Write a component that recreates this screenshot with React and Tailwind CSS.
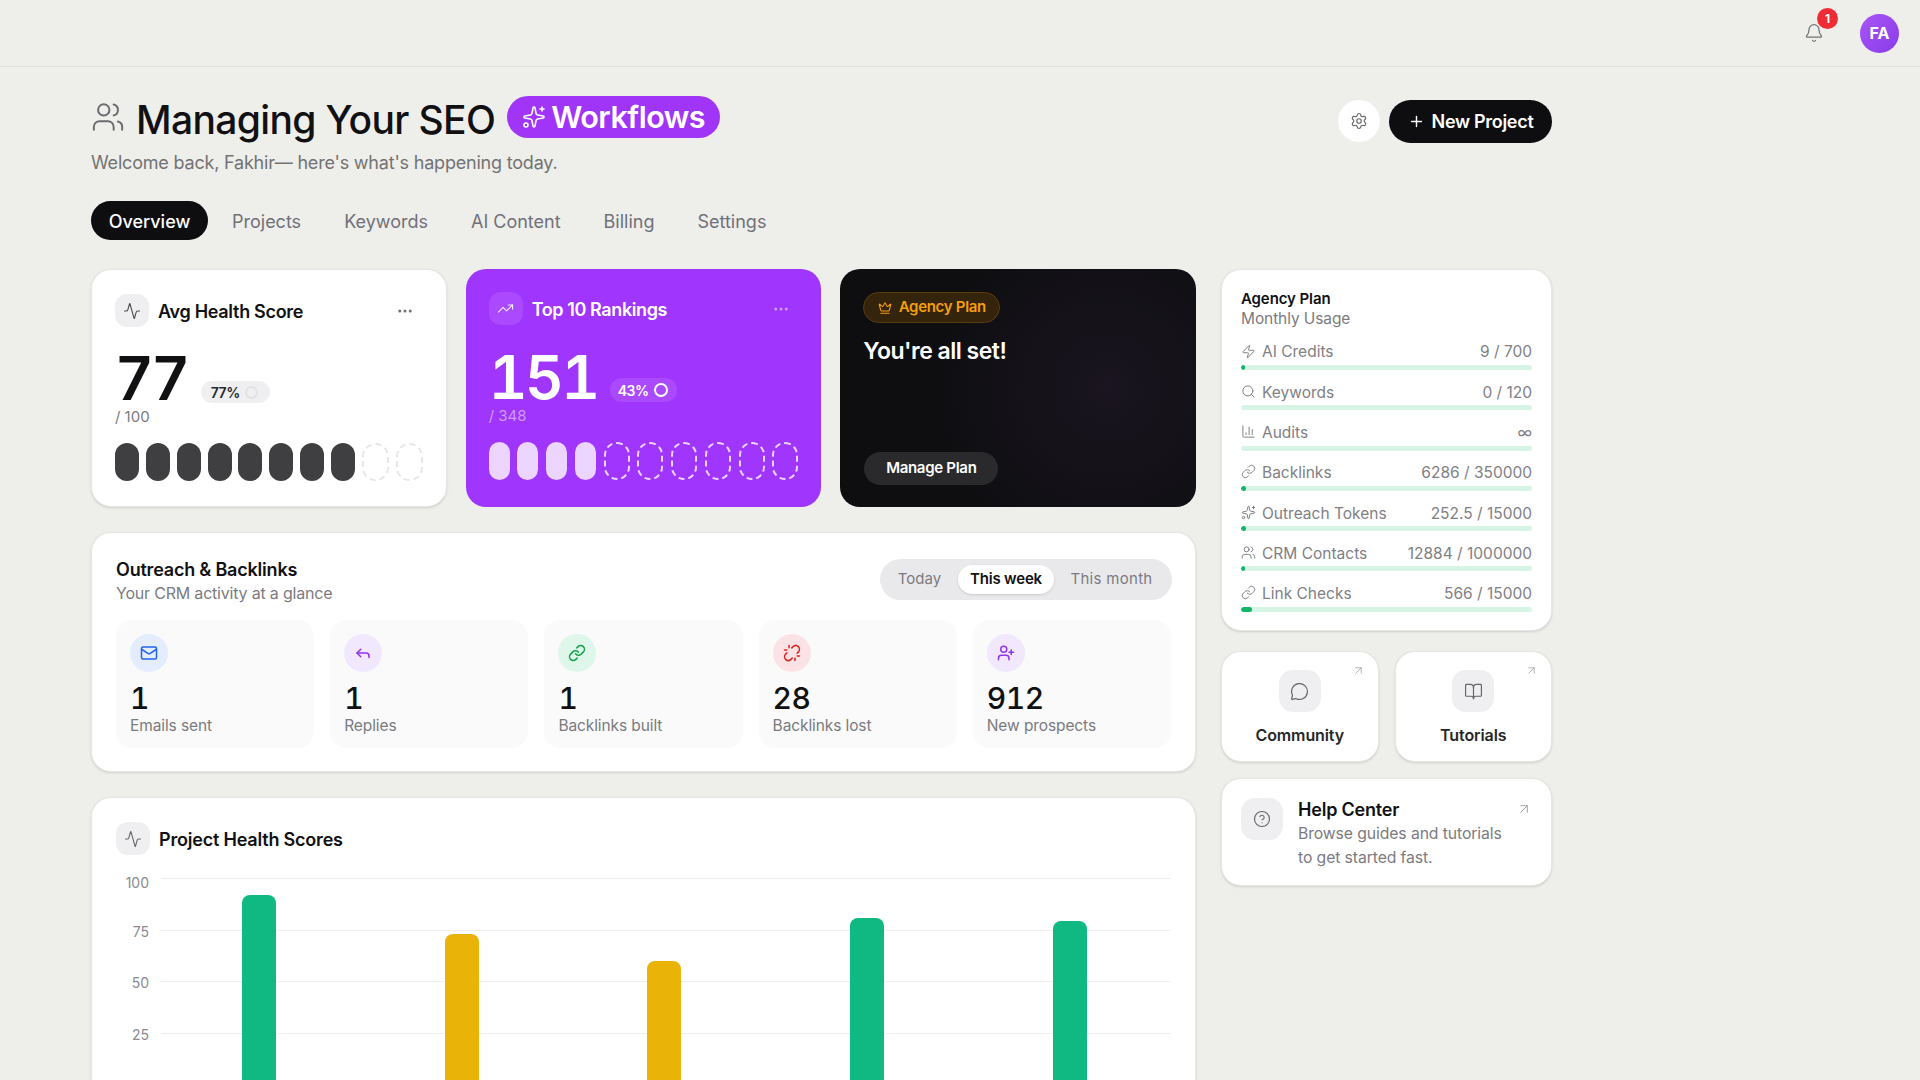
import React from "react";
import { Users, Sparkles, Settings, Plus, Bell, Activity, TrendingUp, Ellipsis, Crown, Zap, Search, ChartColumn, Link as LinkIcon, Mail, Reply, Unlink, UserPlus, MessageCircle, BookOpen, CircleHelp, ArrowUpRight } from "lucide-react";

const tabs = ["Projects", "Keywords", "AI Content", "Billing", "Settings"];
const usage = [
  { icon: Zap, label: "AI Credits", text: "9 / 700", pct: 1.3 },
  { icon: Search, label: "Keywords", text: "0 / 120", pct: 0 },
  { icon: ChartColumn, label: "Audits", text: "∞", pct: 0 },
  { icon: LinkIcon, label: "Backlinks", text: "6286 / 350000", pct: 1.8 },
  { icon: Sparkles, label: "Outreach Tokens", text: "252.5 / 15000", pct: 1.7 },
  { icon: Users, label: "CRM Contacts", text: "12884 / 1000000", pct: 1.3 },
  { icon: LinkIcon, label: "Link Checks", text: "566 / 15000", pct: 3.8 },
];
const stats = [
  { icon: Mail, value: "1", label: "Emails sent", box: "bg-[#e3edfd]", color: "text-[#2563eb]" },
  { icon: Reply, value: "1", label: "Replies", box: "bg-[#f1e8fd]", color: "text-[#9333ea]" },
  { icon: LinkIcon, value: "1", label: "Backlinks built", box: "bg-[#dff6ea]", color: "text-[#16a34a]" },
  { icon: Unlink, value: "28", label: "Backlinks lost", box: "bg-[#fbe3e5]", color: "text-[#dc2626]" },
  { icon: UserPlus, value: "912", label: "New prospects", box: "bg-[#f1e8fd]", color: "text-[#9333ea]" },
];
const bars = [
  { top: "mt-[17px]", color: "bg-[#10b981]" },
  { top: "mt-[56px]", color: "bg-[#eab308]" },
  { top: "mt-[83px]", color: "bg-[#eab308]" },
  { top: "mt-[40px]", color: "bg-[#10b981]" },
  { top: "mt-[43px]", color: "bg-[#10b981]" },
];
const gridRows = [
  { label: "100", offset: "pt-[0px]" },
  { label: "75", offset: "-mt-[3px]" },
  { label: "50", offset: "-mt-[3px]" },
  { label: "25", offset: "-mt-[3px]" },
];

function IconBox({ children, className = "" }) {
  return <div className={"flex h-[33px] w-[34px] items-center justify-center rounded-[12px] " + className}>{children}</div>;
}

export default function App() {
  return (
    <div className="h-screen overflow-hidden bg-[#eeeeeb] text-[#111113] [font-family:Inter,sans-serif]">
      <header className="flex h-[67px] items-center justify-end gap-[36px] border-b border-[#e0e0dd] pr-[21px]">
        <div className="relative">
          <Bell className="h-[20px] w-[20px] text-[#737373]" strokeWidth={1.5} />
          <span className="absolute -right-[14px] -top-[15px] flex h-[21px] w-[21px] items-center justify-center rounded-full bg-[#ef2b36] text-[12px] font-bold text-white">1</span>
        </div>
        <div className="flex h-[39px] w-[39px] items-center justify-center rounded-full bg-gradient-to-br from-[#a855f7] to-[#8b3be8] text-[16px] font-bold text-white">FA</div>
      </header>

      <main className="ml-[91px] w-[1461px] pt-[29px]">
        <div className="flex items-center justify-between">
          <div>
            <div className="flex h-[42px] items-center">
              <Users className="h-[34px] w-[34px] text-[#6b6b70]" strokeWidth={1.4} />
              <h1 className="ml-[11px] mt-[5px] text-[39px] leading-none font-medium tracking-[-0.65px]">Managing Your SEO</h1>
              <div className="ml-[12px] flex h-[42px] w-[213px] items-center justify-center gap-[5px] rounded-full bg-[#a035f8] text-[30.5px] font-semibold tracking-[-0.5px] text-white">
                <Sparkles className="h-[24px] w-[24px]" strokeWidth={1.6} />
                Workflows
              </div>
            </div>
            <p className="mt-[13px] text-[18px] leading-[24px] tracking-[-0.2px] text-[#737373]">Welcome back, Fakhir— here's what's happening today.</p>
          </div>
          <div className="mb-[29px] flex items-center gap-[9px]">
            <div className="flex h-[42px] w-[42px] items-center justify-center rounded-full bg-white">
              <Settings className="h-[18px] w-[18px] text-[#66666b]" strokeWidth={1.5} />
            </div>
            <div className="flex h-[43px] w-[163px] items-center justify-center gap-[7px] rounded-full bg-[#0e0e10] text-[18px] font-semibold tracking-[-0.3px] text-white">
              <Plus className="h-[17px] w-[17px]" strokeWidth={2} />
              New Project
            </div>
          </div>
        </div>

        <nav className="mt-[26px] flex h-[39px] items-center text-[18px] text-[#71717a]">
          <div className="flex h-[39px] w-[117px] items-center justify-center rounded-full bg-[#0e0e10] pt-[2px] font-medium text-white">Overview</div>
          <div className="ml-[24px] flex gap-[43px] pt-[2px]">
            {tabs.map((t) => <span key={t}>{t}</span>)}
          </div>
        </nav>

        <div className="mt-[29px] flex items-start gap-[25px]">
          <div className="flex w-[1105px] flex-col">
            <div className="grid h-[238px] grid-cols-3 gap-[19px]">
              <section className="h-[238px] rounded-[20px] border border-[#e6e6e3] bg-white px-[23px] pt-[24px] shadow-sm">
                <div className="flex items-center">
                  <IconBox className="bg-[#efeff1]"><Activity className="h-[18px] w-[18px] text-[#4b4b50]" strokeWidth={1.5} /></IconBox>
                  <h3 className="ml-[9px] mt-px text-[18px] font-semibold tracking-[-0.3px]">Avg Health Score</h3>
                  <Ellipsis className="ml-auto mr-[9px] h-[18px] w-[18px] text-[#737373]" />
                </div>
                <div className="mt-[21px] flex h-[60px] items-end">
                  <span className="text-[60px] leading-[60px] font-semibold tabular-nums tracking-[-2.5px]">77</span>
                  <span className="mb-[5px] ml-[13px] flex h-[22px] w-[69px] items-center gap-[5px] rounded-full bg-[#efeff1] pl-[10px] text-[14px] font-semibold tracking-[-0.4px] text-[#27272a]">77%<span className="h-[13px] w-[13px] rounded-full border-2 border-[#e2e2e5]" /></span>
                </div>
                <p className="text-[15px] leading-[18px] text-[#7b7b80]">/ 100</p>
                <div className="mt-[17px] flex justify-between">
                  {Array.from({ length: 8 }).map((_, i) => <span key={i} className="h-[38px] w-[24px] rounded-full bg-[#3f3f41]" />)}
                  {Array.from({ length: 2 }).map((_, i) => <span key={i} className="h-[38px] w-[27px] rounded-full border-2 border-dashed border-[#e7e7e9]" />)}
                </div>
              </section>

              <section className="rounded-[20px] bg-[#a035fd] p-[23px] text-white">
                <div className="flex items-center">
                  <IconBox className="bg-white/10"><TrendingUp className="h-[17px] w-[17px] text-white/90" strokeWidth={1.5} /></IconBox>
                  <h3 className="ml-[9px] mt-px text-[18px] font-semibold tracking-[-0.4px]">Top 10 Rankings</h3>
                  <Ellipsis className="ml-auto mr-[8px] h-[18px] w-[18px] text-white/50" />
                </div>
                <div className="mt-[22px] flex h-[60px] items-end">
                  <span className="text-[60px] leading-[60px] font-semibold tabular-nums tracking-[-2.5px]">151</span>
                  <span className="mb-[5px] ml-[12px] flex h-[24px] w-[67px] items-center gap-[5px] rounded-full bg-white/10 pl-[8px] text-[14px] font-semibold tracking-[-0.4px]">43%<span className="h-[14px] w-[14px] rounded-full border-2 border-white" /></span>
                </div>
                <p className="text-[15px] leading-[18px] text-white/50">/ 348</p>
                <div className="mt-[17px] flex justify-between">
                  {Array.from({ length: 4 }).map((_, i) => <span key={i} className="h-[38px] w-[21px] rounded-full bg-[#ecd5ff]" />)}
                  {Array.from({ length: 6 }).map((_, i) => <span key={i} className="h-[38px] w-[26px] rounded-full border-2 border-dashed border-[#ecd5ff]" />)}
                </div>
              </section>

              <section className="flex flex-col items-start rounded-[20px] bg-[radial-gradient(circle_at_75%_50%,#1a1520,#0e0e11_60%)] px-[23px] pt-[23px] text-white">
                <div className="flex h-[31px] w-[137px] items-center justify-center gap-[7px] rounded-full border border-[#5c3d0c] bg-[#33240b] text-[15px] font-semibold tracking-[-0.3px] text-[#f59e0b]">
                  <Crown className="h-[14px] w-[14px]" strokeWidth={1.8} />
                  Agency Plan
                </div>
                <h3 className="mt-[12px] text-[23px] leading-[32px] font-semibold tracking-[-0.5px]">You're all set!</h3>
                <div className="mt-[85px] ml-px flex h-[33px] w-[134px] items-center justify-center rounded-full bg-[#2a2a2d] text-[15px] font-semibold tracking-[-0.3px]">Manage Plan</div>
              </section>
            </div>

            <section className="mt-[25px] h-[240px] rounded-[20px] border border-[#e6e6e3] bg-white px-[24px] pt-[25px] shadow-sm">
              <div className="flex items-start justify-between">
                <div>
                  <h3 className="text-[18px] leading-[24px] font-semibold tracking-[-0.2px]">Outreach &amp; Backlinks</h3>
                  <p className="text-[16px] leading-[22px] tracking-[-0.2px] text-[#7b7b80]">Your CRM activity at a glance</p>
                </div>
                <div className="mr-[-1px] mt-px flex h-[41px] w-[292px] items-center rounded-full bg-[#e9e9ec] px-[6px] text-[15px] text-[#7b7b80]">
                  <span className="w-[72px] pr-[5px] text-center">Today</span>
                  <span className="flex h-[29px] w-[96px] items-center justify-center rounded-full bg-white font-semibold tracking-[-0.2px] text-[#111113] shadow-sm">This week</span>
                  <span className="flex-1 pl-[3px] text-center tracking-[0.3px]">This month</span>
                </div>
              </div>
              <div className="mt-[16px] grid grid-cols-5 gap-[16px]">
                {stats.map((s) => (
                  <div key={s.label} className="h-[128px] rounded-[16px] bg-[#fafafb] px-[14px] pt-[14px]">
                    <div className={"flex h-[38px] w-[38px] items-center justify-center rounded-full " + s.box}>
                      <s.icon className={"h-[18px] w-[18px] " + s.color} strokeWidth={2} />
                    </div>
                    <div className="mt-[6px] text-[30px] leading-[40px] font-medium tabular-nums tracking-[-0.5px]">{s.value}</div>
                    <div className="-mt-[2px] text-[15.5px] leading-[20px] tracking-[-0.1px] text-[#7b7b80]">{s.label}</div>
                  </div>
                ))}
              </div>
            </section>

            <section className="mt-[25px] h-[400px] rounded-[20px] border border-[#e6e6e3] bg-white px-[24px] pt-[24px] shadow-sm">
              <div className="flex items-center">
                <IconBox className="h-[33px] bg-[#efeff1]"><Activity className="h-[18px] w-[18px] text-[#66666b]" strokeWidth={1.5} /></IconBox>
                <h3 className="ml-[9px] mt-px text-[18px] font-semibold tracking-[-0.2px]">Project Health Scores</h3>
              </div>
              <div className="relative mt-[23px]">
                {gridRows.map((r) => (
                  <div key={r.label} className="flex h-[51.5px] items-start">
                    <span className={"w-[33px] text-right text-[14px] leading-[10px] text-[#8a8a8f] " + r.offset}>{r.label}</span>
                    <div className="ml-[12px] flex-1 border-t border-[#efeff0]" />
                  </div>
                ))}
                <div className="absolute inset-y-0 left-[42px] right-0 flex justify-around">
                  {bars.map((b, i) => <div key={i} className={"h-[300px] w-[34px] rounded-t-[8px] " + b.top + " " + b.color} />)}
                </div>
              </div>
            </section>
          </div>

          <aside className="flex w-[331px] flex-col">
            <section className="h-[362px] rounded-[20px] border border-[#e6e6e3] bg-white px-[19px] pt-[19px] shadow-sm">
              <h3 className="text-[15px] leading-[20px] font-semibold tracking-[-0.1px]">Agency Plan</h3>
              <p className="text-[15.5px] leading-[20px] tracking-[-0.1px] text-[#7b7b80]">Monthly Usage</p>
              <div className="mt-[12px] flex flex-col gap-[11.3px]">
                {usage.map((u) => (
                  <div key={u.label}>
                    <div className="flex h-[22px] items-center text-[15.5px] text-[#808085]">
                      <u.icon className="-mt-[2px] h-[15px] w-[15px]" strokeWidth={1.6} />
                      <span className="ml-[6px]">{u.label}</span>
                      <span className="ml-auto">{u.text}</span>
                    </div>
                    <div className="mt-[2px] h-[5px] overflow-hidden rounded-full bg-[#d6f5e5]">
                      <div className="h-full rounded-full bg-[#0fb76b]" style={{ width: u.pct + "%" }} />
                    </div>
                  </div>
                ))}
              </div>
            </section>

            <div className="mt-[20px] grid grid-cols-2 gap-[16px]">
              {[{ icon: MessageCircle, label: "Community" }, { icon: BookOpen, label: "Tutorials" }].map((c) => (
                <div key={c.label} className="relative flex h-[111px] flex-col items-center rounded-[20px] border border-[#e6e6e3] bg-white pt-[18px] shadow-sm">
                  <ArrowUpRight className="absolute right-[13px] top-[12px] h-[13px] w-[13px] text-[#a3a3a8]" strokeWidth={1.5} />
                  <div className="flex h-[42px] w-[42px] items-center justify-center rounded-[14px] bg-[#efeff1]">
                    <c.icon className="h-[19px] w-[19px] text-[#66666b]" strokeWidth={1.5} />
                  </div>
                  <span className="mt-[13px] text-[16px] leading-[20px] font-semibold tracking-[-0.1px] text-[#27272a]">{c.label}</span>
                </div>
              ))}
            </div>

            <section className="relative mt-[16px] flex h-[108px] rounded-[20px] border border-[#e6e6e3] bg-white pl-[19px] pt-[19px] shadow-sm">
              <ArrowUpRight className="absolute right-[19px] top-[22px] h-[16px] w-[16px] text-[#a3a3a8]" strokeWidth={1.5} />
              <div className="flex h-[42px] w-[42px] items-center justify-center rounded-[14px] bg-[#efeff1]">
                <CircleHelp className="h-[18px] w-[18px] text-[#66666b]" strokeWidth={1.5} />
              </div>
              <div className="ml-[15px]">
                <h3 className="text-[18px] leading-[24px] font-semibold tracking-[-0.2px]">Help Center</h3>
                <p className="text-[15.75px] leading-[23.5px] tracking-[-0.1px] text-[#7b7b80]">Browse guides and tutorials<br />to get started fast.</p>
              </div>
            </section>
          </aside>
        </div>
      </main>
    </div>
  );
}
